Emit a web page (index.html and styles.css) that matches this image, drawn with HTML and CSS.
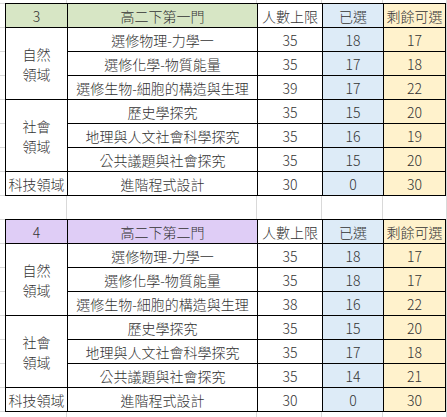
FILE: index.html
```html
<!DOCTYPE html>
<html lang="zh-Hant">
<head>
    <meta charset="UTF-8">
    <title>選修課程名額</title>
    <link rel="stylesheet" href="styles.css">
</head>
<body>
    <div class="sheet">
        <!-- 第一門 -->
        <table class="course-table">
            <colgroup>
                <col class="col-field">
                <col class="col-name">
                <col class="col-limit">
                <col class="col-taken">
                <col class="col-left">
            </colgroup>
            <tr class="head green">
                <td class="tint">3</td>
                <td class="tint">高二下第一門</td>
                <td>人數上限</td>
                <td class="taken">已選</td>
                <td class="left">剩餘可選</td>
            </tr>
            <tr>
                <td rowspan="3" class="field">自然<br>領域</td>
                <td>選修物理-力學一</td>
                <td>35</td>
                <td class="taken">18</td>
                <td class="left">17</td>
            </tr>
            <tr>
                <td>選修化學-物質能量</td>
                <td>35</td>
                <td class="taken">17</td>
                <td class="left">18</td>
            </tr>
            <tr>
                <td>選修生物-細胞的構造與生理</td>
                <td>39</td>
                <td class="taken">17</td>
                <td class="left">22</td>
            </tr>
            <tr>
                <td rowspan="3" class="field">社會<br>領域</td>
                <td>歷史學探究</td>
                <td>35</td>
                <td class="taken">15</td>
                <td class="left">20</td>
            </tr>
            <tr>
                <td>地理與人文社會科學探究</td>
                <td>35</td>
                <td class="taken">16</td>
                <td class="left">19</td>
            </tr>
            <tr>
                <td>公共議題與社會探究</td>
                <td>35</td>
                <td class="taken">15</td>
                <td class="left">20</td>
            </tr>
            <tr>
                <td>科技領域</td>
                <td>進階程式設計</td>
                <td>30</td>
                <td class="taken">0</td>
                <td class="left">30</td>
            </tr>
        </table>

        <!-- 第二門 -->
        <table class="course-table second">
            <colgroup>
                <col class="col-field">
                <col class="col-name">
                <col class="col-limit">
                <col class="col-taken">
                <col class="col-left">
            </colgroup>
            <tr class="head purple">
                <td class="tint">4</td>
                <td class="tint">高二下第二門</td>
                <td>人數上限</td>
                <td class="taken">已選</td>
                <td class="left">剩餘可選</td>
            </tr>
            <tr>
                <td rowspan="3" class="field">自然<br>領域</td>
                <td>選修物理-力學一</td>
                <td>35</td>
                <td class="taken">18</td>
                <td class="left">17</td>
            </tr>
            <tr>
                <td>選修化學-物質能量</td>
                <td>35</td>
                <td class="taken">18</td>
                <td class="left">17</td>
            </tr>
            <tr>
                <td>選修生物-細胞的構造與生理</td>
                <td>38</td>
                <td class="taken">16</td>
                <td class="left">22</td>
            </tr>
            <tr>
                <td rowspan="3" class="field">社會<br>領域</td>
                <td>歷史學探究</td>
                <td>35</td>
                <td class="taken">15</td>
                <td class="left">20</td>
            </tr>
            <tr>
                <td>地理與人文社會科學探究</td>
                <td>35</td>
                <td class="taken">17</td>
                <td class="left">18</td>
            </tr>
            <tr>
                <td>公共議題與社會探究</td>
                <td>35</td>
                <td class="taken">14</td>
                <td class="left">21</td>
            </tr>
            <tr>
                <td>科技領域</td>
                <td>進階程式設計</td>
                <td>30</td>
                <td class="taken">0</td>
                <td class="left">30</td>
            </tr>
        </table>
    </div>
</body>
</html>
```

FILE: styles.css
```css
/* Spreadsheet page */
body {
    margin: 0;
    background: #fff;
}

.sheet {
    height: 417px;
    padding: 3px 0 0 5px;
    box-sizing: border-box;
    /* light grid lines of the sheet behind the tables */
    background-image:
        repeating-linear-gradient(to bottom, #d9d9d9 0 1px, transparent 1px 24px),
        linear-gradient(to right,
            transparent 0 66px, #d9d9d9 66px 67px,
            transparent 67px 256px, #d9d9d9 256px 257px,
            transparent 257px 321px, #d9d9d9 321px 322px,
            transparent 322px 382px, #d9d9d9 382px 383px,
            transparent 383px 446px, #d9d9d9 446px 447px);
    background-position: 0 3px, 0 0;
}

/* Course tables */
.course-table {
    border-collapse: collapse;
    table-layout: fixed;
    width: 441px;
    font-family: "Noto Sans CJK TC", "Liberation Sans", sans-serif;
    font-size: 14px;
    font-weight: 300;
    color: #333;
    background: #fff;
}

.course-table.second {
    margin-top: 23px;
}

.col-field { width: 62px; }
.col-name { width: 190px; }
.col-limit { width: 65px; }
.col-taken { width: 61px; }
.col-left { width: 62px; }

.course-table tr {
    height: 24px;
}

.course-table td {
    border: 1px solid #000;
    padding: 0;
    text-align: center;
    vertical-align: middle;
    line-height: 20px;
    white-space: nowrap;
    overflow: hidden;
}

.course-table .field {
    line-height: 20px;
}

/* Column tints */
.taken {
    background: #ddebf7;
}

.left {
    background: #fff2cc;
}

.green .tint {
    background: #d7e6c5;
}

.purple .tint {
    background: #dfcdf6;
}
```
